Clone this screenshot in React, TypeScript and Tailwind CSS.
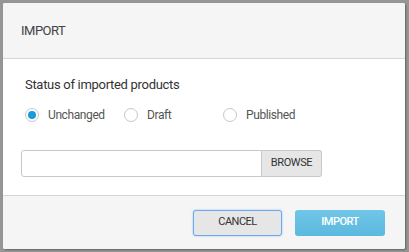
import React from "react";

const options = ["Unchanged", "Draft", "Published"];

function Radio({ label, checked }: { label: string; checked?: boolean }) {
  return (
    <label className="flex w-[99px] items-center gap-[9px]">
      <span className="flex h-[14px] w-[14px] items-center justify-center rounded-full border border-[#c8c8c8] bg-white">
        {checked && <span className="h-[8px] w-[8px] rounded-full bg-[#1a9ad9]" />}
      </span>
      <span className="text-[12px] leading-4 tracking-[-0.4px] text-[#555]">{label}</span>
    </label>
  );
}

export default function App() {
  return (
    <div
      className="h-[252px] w-[409px] overflow-hidden bg-[#969696] pl-[3px] pt-[3px]"
      style={{ fontFamily: "Roboto, 'Noto Sans', sans-serif" }}
    >
      {/* Modal */}
      <div className="flex h-[246px] w-[402px] flex-col overflow-hidden rounded-[2px] bg-white shadow-[1px_1px_2px_rgba(0,0,0,0.35)]">
        <div className="flex h-[56px] shrink-0 items-center border-b border-[#d6d6d6] bg-[#f5f5f5] pl-[18px]">
          <h1 className="text-[13px] tracking-[-0.5px] text-[#444]">IMPORT</h1>
        </div>

        <div className="h-[136px] shrink-0 pt-[16px]">
          <p className="pl-[22px] text-[13px] leading-5 tracking-[-0.3px] text-[#333]">
            Status of imported products
          </p>
          <div className="mt-[12px] flex pl-[22px]">
            {options.map((o, i) => (
              <Radio key={o} label={o} checked={i === 0} />
            ))}
          </div>
          <div className="ml-[18px] mt-[27px] flex h-[27px] w-[301px]">
            <input className="h-full flex-1 rounded-l-[3px] border border-[#c8c8c8] bg-white outline-none" />
            <button className="h-full w-[60px] rounded-r-[3px] border border-l-0 border-[#c8c8c8] bg-[#e6e6e6] text-[11px] tracking-[-0.4px] text-[#333]">
              BROWSE
            </button>
          </div>
        </div>

        <div className="flex h-[54px] shrink-0 items-center justify-end gap-[13px] border-t border-[#d6d6d6] bg-[#f5f5f5] pr-[20px]">
          <button className="h-[26px] w-[89px] rounded-[3px] border border-[#6aaaf0] bg-[#e6e6e6] text-[11px] tracking-[-0.5px] text-[#333] shadow-[0_0_2px_rgba(80,150,240,0.6)]">
            CANCEL
          </button>
          <button className="h-[26px] w-[90px] rounded-[3px] bg-gradient-to-b from-[#70c6e6] to-[#5bb9df] text-[11px] font-medium tracking-[-0.5px] text-white">
            IMPORT
          </button>
        </div>
      </div>
    </div>
  );
}
